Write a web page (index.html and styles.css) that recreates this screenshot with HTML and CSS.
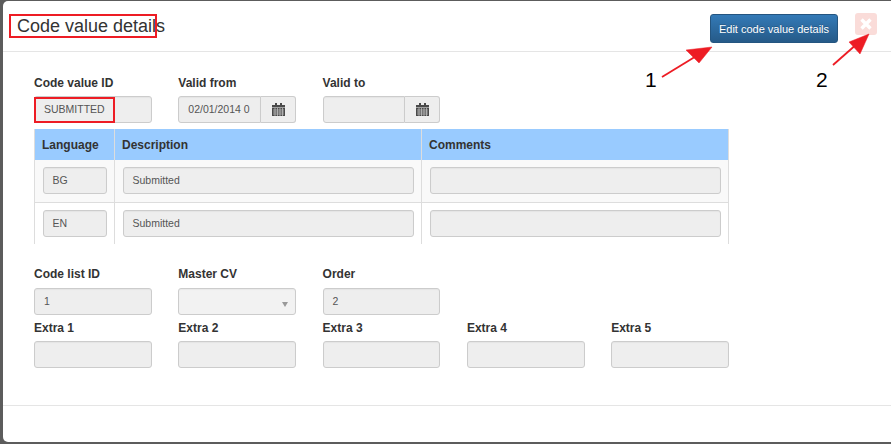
FILE: index.html
```html
<!DOCTYPE html>
<html lang="en">
<head>
<meta charset="utf-8">
<title>Code value details</title>
<link rel="stylesheet" href="styles.css">
</head>
<body>
<div class="modal">
  <header class="head">
    <h1 class="title">Code value details</h1>
    <button class="btn-edit" type="button">Edit code value details</button>
    <button class="btn-close" type="button" aria-label="Close">
      <svg width="14" height="14" viewBox="0 0 14 14"><path d="M2.5 2.5l9 9M11.5 2.5l-9 9" stroke="#fff" stroke-width="3.4" fill="none"/></svg>
    </button>
  </header>
  <main class="body">
    <div class="grid">
      <div class="field"><label>Code value ID</label><div class="input">SUBMITTED</div></div>
      <div class="field"><label>Valid from</label>
        <div class="group"><div class="input clip">02/01/2014 0</div><span class="addon"><svg width="13" height="13" viewBox="0 0 13 13"><path fill="#4a4a4a" d="M0 2h3V0h2v2h3V0h2v2h3v11H0z"/><path stroke="#c9c9c9" stroke-width=".7" fill="none" d="M0 4.5h13M1 7h11M1 9h11M1 11h11M3 5v8M5.500 5v8M8 5v8M10.500 5v8"/></svg></span></div></div>
      <div class="field"><label>Valid to</label>
        <div class="group"><div class="input clip"></div><span class="addon"><svg width="13" height="13" viewBox="0 0 13 13"><path fill="#4a4a4a" d="M0 2h3V0h2v2h3V0h2v2h3v11H0z"/><path stroke="#c9c9c9" stroke-width=".7" fill="none" d="M0 4.500h13M1 7h11M1 9h11M1 11h11M3 5v8M5.500 5v8M8 5v8M10.500 5v8"/></svg></span></div></div>
    </div>
    <table class="langs">
      <thead><tr><th class="c1">Language</th><th class="c2">Description</th><th>Comments</th></tr></thead>
      <tbody>
        <tr class="odd"><td><div class="input">BG</div></td><td><div class="input">Submitted</div></td><td><div class="input"></div></td></tr>
        <tr><td><div class="input">EN</div></td><td><div class="input">Submitted</div></td><td><div class="input"></div></td></tr>
      </tbody>
    </table>
    <div class="grid lower">
      <div class="field"><label>Code list ID</label><div class="input">1</div></div>
      <div class="field"><label>Master CV</label><div class="input select"><span class="caret"></span></div></div>
      <div class="field"><label>Order</label><div class="input">2</div></div>
    </div>
    <div class="grid extras">
      <div class="field"><label>Extra 1</label><div class="input"></div></div>
      <div class="field"><label>Extra 2</label><div class="input"></div></div>
      <div class="field"><label>Extra 3</label><div class="input"></div></div>
      <div class="field"><label>Extra 4</label><div class="input"></div></div>
      <div class="field"><label>Extra 5</label><div class="input"></div></div>
    </div>
  </main>
  <footer class="foot"></footer>
</div>
<div class="mark mark-title"></div>
<div class="mark mark-id"></div>
<svg class="arrows" width="891" height="100" viewBox="0 0 891 100">
  <g fill="#ed1c24" stroke="#ed1c24">
    <path d="M662 77L698 55" stroke-width="1.800" fill="none"/>
    <path d="M712 47L686 50L699 63z" stroke-width=".5"/>
    <path d="M833 65L858 43" stroke-width="1.800" fill="none"/>
    <path d="M869 34L849 42L860 54z" stroke-width=".5"/>
  </g>
</svg>
<span class="num num1">1</span>
<span class="num num2">2</span>
</body>
</html>
```
FILE: styles.css
```css
* { box-sizing: border-box; }
html, body { margin: 0; height: 444px; overflow: hidden; }
body {
  position: relative;
  background: #5c5c5c;
  font-family: "Liberation Sans", Arial, sans-serif;
  color: #333;
  padding: 1px 0 2px 3px;
}
.modal {
  width: 888px;
  height: 441px;
  background: #fff;
  border-radius: 5px 0 0 5px;
  display: flex;
  flex-direction: column;
}
.head {
  height: 51px;
  flex: none;
  border-bottom: 1px solid #e5e5e5;
  display: flex;
  align-items: flex-start;
  padding: 12px 14px 0 14px;
}
.title {
  margin: 0 auto 0 0;
  font-size: 18px;
  font-weight: 400;
  line-height: 26px;
}
.btn-edit {
  width: 128px;
  height: 29px;
  margin-top: 1px;
  padding: 0;
  border: 1px solid #245580;
  border-radius: 3px;
  background: linear-gradient(#337ab7, #265a88);
  color: #fff;
  font: 11px "Liberation Sans", Arial, sans-serif;
  text-shadow: 0 -1px 0 rgba(0,0,0,.2);
}
.btn-close {
  width: 22px;
  height: 22px;
  margin-left: 17px;
  padding: 0;
  border: 0;
  border-radius: 3px;
  background: #fadcd9;
  display: flex;
  align-items: center;
  justify-content: center;
}
.body { flex: 1; padding: 23px 0 0 31px; }
.grid {
  width: 695px;
  display: grid;
  grid-template-columns: repeat(5, 117.800px);
  column-gap: 26.500px;
}
.field label {
  display: block;
  height: 21px;
  font-size: 12px;
  font-weight: 700;
  line-height: 16px;
}
.input {
  height: 27px;
  background: #eee;
  border: 1px solid #ccc;
  border-radius: 3px;
  padding: 0 9px;
  font-size: 10.500px;
  line-height: 25px;
  color: #555;
  box-shadow: inset 0 1px 1px rgba(0,0,0,.04);
  white-space: nowrap;
}
.group { display: flex; }
.clip {
  flex: 1;
  min-width: 0;
  overflow: hidden;
  border-radius: 3px 0 0 3px;
}
.addon {
  flex: none;
  width: 35px;
  height: 27px;
  background: #eee;
  border: 1px solid #ccc;
  border-left: 0;
  border-radius: 0 3px 3px 0;
  display: flex;
  align-items: center;
  justify-content: center;
}
.langs {
  width: 695px;
  margin-top: 6px;
  border-collapse: collapse;
  table-layout: fixed;
}
.langs th {
  height: 31px;
  padding: 0 7px;
  background: #99cbff;
  border-left: 1px solid #ddd;
  border-right: 1px solid #ddd;
  font-size: 12px;
  font-weight: 700;
  text-align: left;
}
.langs .c1 { width: 80px; }
.langs .c2 { width: 307px; }
.langs td {
  height: 42px;
  padding: 0 7.500px;
  border-left: 1px solid #ddd;
  border-right: 1px solid #ddd;
  border-top: 1px solid #ddd;
}
.langs .odd td { background: #f9f9f9; border-top: 0; }
.lower { margin-top: 22px; }
.lower .field label { height: 22px; }
.select { background: #f2f2f2; position: relative; }
.caret {
  position: absolute;
  right: 7px;
  top: 13px;
  border-left: 3px solid transparent;
  border-right: 3px solid transparent;
  border-top: 5px solid #999;
}
.extras { margin-top: 5px; }
.extras .field label { height: 21px; }
.foot {
  flex: none;
  height: 37px;
  border-top: 1px solid #e5e5e5;
}
.mark {
  position: absolute;
  border: 2px solid #ed1c24;
}
.mark-title { left: 9px; top: 14px; width: 148px; height: 24px; }
.mark-id { left: 34px; top: 97px; width: 81px; height: 26px; }
.arrows { position: absolute; left: 0; top: 0; }
.num {
  position: absolute;
  top: 67px;
  font-size: 21px;
  line-height: 26px;
  color: #000;
}
.num1 { left: 645px; }
.num2 { left: 816px; }
```
